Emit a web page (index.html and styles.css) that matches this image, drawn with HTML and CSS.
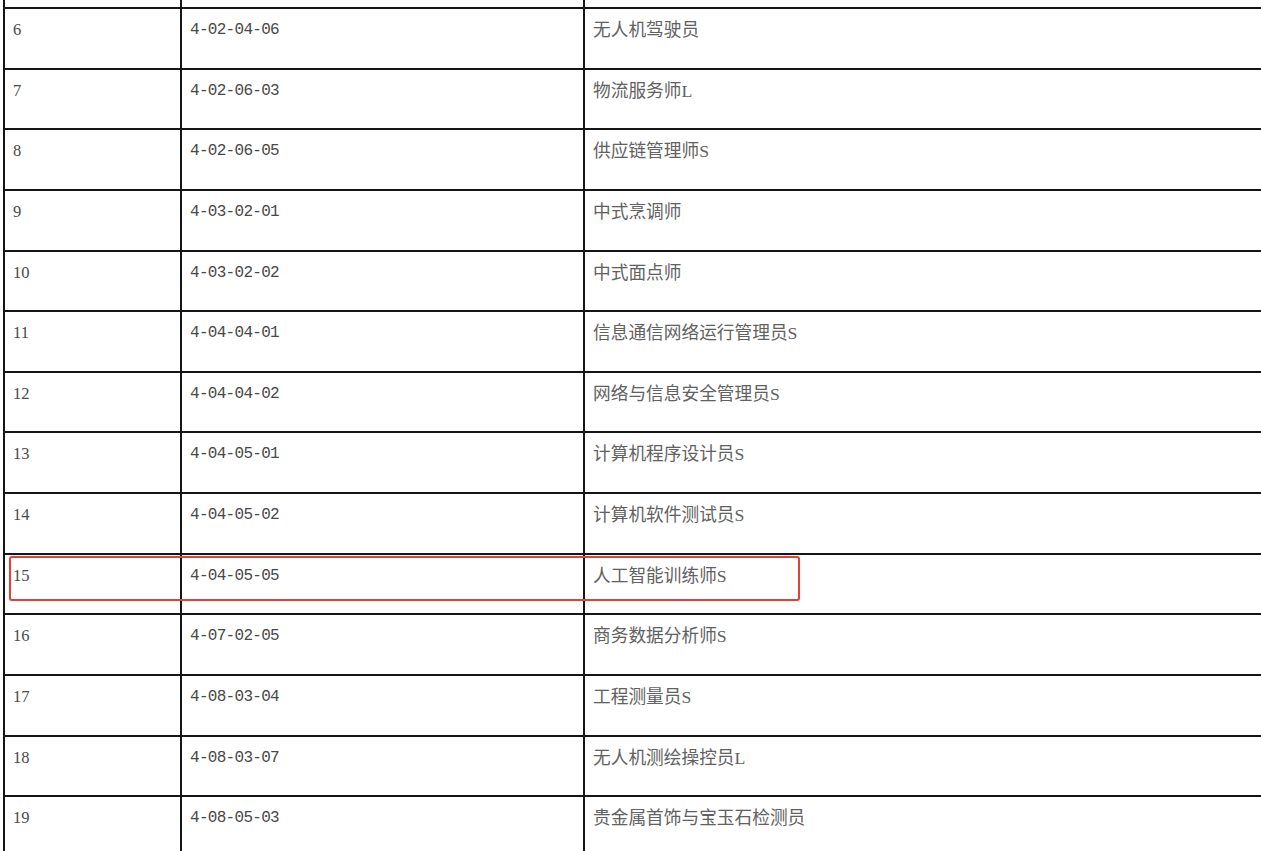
FILE: index.html
```html
<!DOCTYPE html>
<html lang="zh">
<head>
<meta charset="utf-8">
<link rel="stylesheet" href="styles.css">
</head>
<body>
<div class="wrap">
<table class="grid">
<colgroup><col class="c1"><col class="c2"><col class="c3"></colgroup>
<tr class="stub"><td></td><td></td><td></td></tr>
<tr><td>6</td><td class="code">4-02-04-06</td><td class="name">无人机驾驶员</td></tr>
<tr><td>7</td><td class="code">4-02-06-03</td><td class="name">物流服务师L</td></tr>
<tr><td>8</td><td class="code">4-02-06-05</td><td class="name">供应链管理师S</td></tr>
<tr><td>9</td><td class="code">4-03-02-01</td><td class="name">中式烹调师</td></tr>
<tr><td>10</td><td class="code">4-03-02-02</td><td class="name">中式面点师</td></tr>
<tr><td>11</td><td class="code">4-04-04-01</td><td class="name">信息通信网络运行管理员S</td></tr>
<tr><td>12</td><td class="code">4-04-04-02</td><td class="name">网络与信息安全管理员S</td></tr>
<tr><td>13</td><td class="code">4-04-05-01</td><td class="name">计算机程序设计员S</td></tr>
<tr><td>14</td><td class="code">4-04-05-02</td><td class="name">计算机软件测试员S</td></tr>
<tr><td>15</td><td class="code">4-04-05-05</td><td class="name">人工智能训练师S</td></tr>
<tr><td>16</td><td class="code">4-07-02-05</td><td class="name">商务数据分析师S</td></tr>
<tr><td>17</td><td class="code">4-08-03-04</td><td class="name">工程测量员S</td></tr>
<tr><td>18</td><td class="code">4-08-03-07</td><td class="name">无人机测绘操控员L</td></tr>
<tr><td>19</td><td class="code">4-08-05-03</td><td class="name">贵金属首饰与宝玉石检测员</td></tr>
</table>
<div class="mark"></div>
</div>
</body>
</html>
```
FILE: styles.css
```css
html, body {
  margin: 0;
  padding: 0;
  background: #fff;
  overflow: hidden;
  width: 1261px;
  height: 851px;
}
.wrap {
  position: relative;
  padding-left: 3px;
}
.grid {
  border-collapse: collapse;
  table-layout: fixed;
  width: 1400px;
  font-family: "Liberation Serif", "Noto Sans CJK SC", serif;
  font-size: 17px;
  color: #5a5a5a;
}
.c1 { width: 177px; }
.c2 { width: 403px; }
.c3 { width: 820px; }
.grid td {
  border: 2px solid #151515;
  height: 60.64px;
  padding: 11px 8px 0 8px;
  vertical-align: top;
  line-height: 20px;
  box-sizing: border-box;
}
.grid tr.stub td {
  border-top: none;
  height: 8px;
  padding: 0;
}
.grid td:first-child { font-size: 16.5px; color: #4a4a4a; }
.grid td.code {
  font-family: "Liberation Mono", monospace;
  font-size: 16px;
  letter-spacing: -0.7px;
  color: #484848;
}
.grid td.name {
  font-size: 17.7px;
  color: #616161;
}
.mark {
  position: absolute;
  left: 9px;
  top: 556px;
  width: 791px;
  height: 45px;
  border: 2px solid #d9453e;
  border-radius: 3px;
  box-sizing: border-box;
  box-shadow: 0 0 1px rgba(217,69,62,0.5);
}
```
